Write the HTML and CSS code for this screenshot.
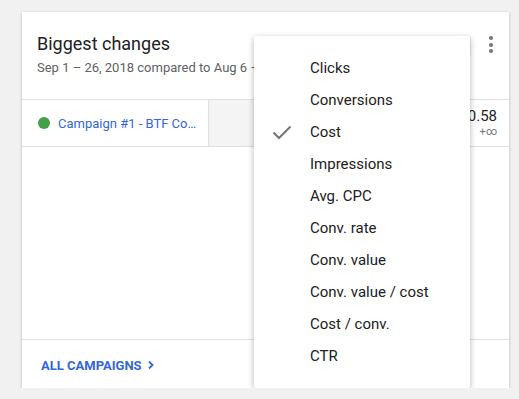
FILE: index.html
```html
<!DOCTYPE html>
<html lang="en">
<head>
    <meta charset="UTF-8">
    <meta name="viewport" content="width=device-width, initial-scale=1.0">
    <title>Biggest changes</title>
    <link rel="stylesheet" href="styles.css">
</head>
<body>
    <div class="card">
        <div class="header">
            <div class="titles">
                <h1>Biggest changes</h1>
                <div class="subtitle">Sep 1 – 26, 2018 compared to Aug 6 – 31, 2018</div>
            </div>
            <div class="metric-btn">Cost</div>
            <div class="kebab">
                <span></span><span></span><span></span>
            </div>
        </div>
        <div class="row">
            <div class="name">
                <span class="dot"></span>
                <a href="#">Campaign #1 - BTF Co…</a>
            </div>
            <div class="bar"></div>
            <div class="value">
                <div class="num">$0.58</div>
                <div class="delta">+∞</div>
            </div>
        </div>
        <div class="spacer"></div>
        <div class="footer">
            <a href="#">ALL CAMPAIGNS
                <svg width="8" height="10" viewBox="0 0 8 10"><path d="M2 1.5 L5.5 5 L2 8.5" fill="none" stroke="#3367d6" stroke-width="1.8"/></svg>
            </a>
        </div>

        <ul class="menu">
            <li>Clicks</li>
            <li>Conversions</li>
            <li class="checked">
                <svg class="check" width="20" height="16" viewBox="0 0 20 16"><path d="M1.5 8.5 L7 14 L18.5 2.5" fill="none" stroke="#757575" stroke-width="2"/></svg>
                Cost
            </li>
            <li>Impressions</li>
            <li>Avg. CPC</li>
            <li>Conv. rate</li>
            <li>Conv. value</li>
            <li>Conv. value / cost</li>
            <li>Cost / conv.</li>
            <li>CTR</li>
        </ul>
    </div>
</body>
</html>
```
FILE: styles.css
```css
body {
    font-family: Roboto, Arial, sans-serif;
    background-color: #f1f1f1;
    margin: 0;
    padding: 12px 0 0 22px;
}
.card {
    position: relative;
    width: 487px;
    height: 376px;
    background-color: #fff;
    box-shadow: 0 1px 3px rgba(0, 0, 0, 0.25);
    display: flex;
    flex-direction: column;
}
.header {
    height: 88px;
    display: flex;
    padding: 0 12px 0 15px;
    border-bottom: 1px solid #e0e0e0;
    box-sizing: border-box;
}
.titles {
    flex: 1;
    overflow: hidden;
    white-space: nowrap;
}
h1 {
    margin: 20px 0 0;
    font-size: 18px;
    font-weight: 400;
    color: #212121;
    line-height: 24px;
}
.subtitle {
    margin-top: 4px;
    font-size: 13px;
    color: #616161;
}
.metric-btn {
    margin-top: 24px;
    width: 52px;
    height: 20px;
    border-radius: 2px;
    background-color: #eee;
    font-size: 13px;
}
.kebab {
    margin: 24px 0 0 14px;
    width: 12px;
    display: flex;
    flex-direction: column;
    align-items: center;
    gap: 2.5px;
}
.kebab span {
    width: 4px;
    height: 4px;
    border-radius: 50%;
    background-color: #757575;
}
.row {
    height: 47px;
    display: flex;
    border-bottom: 1px solid #e0e0e0;
    box-sizing: border-box;
}
.name {
    width: 187px;
    box-sizing: border-box;
    display: flex;
    align-items: center;
    padding-left: 16px;
    border-right: 1px solid #e0e0e0;
}
.dot {
    width: 12px;
    height: 12px;
    border-radius: 50%;
    background-color: #43a047;
    margin-right: 8px;
    flex-shrink: 0;
}
.name a {
    color: #3367d6;
    font-size: 13px;
    text-decoration: none;
    white-space: nowrap;
}
.bar {
    flex: 1;
    background-color: #f4f4f4;
}
.value {
    width: 74px;
    padding-right: 12px;
    text-align: right;
    padding-top: 7px;
}
.num {
    font-size: 15px;
    color: #212121;
}
.delta {
    font-size: 11px;
    color: #757575;
}
.spacer {
    flex: 1;
}
.footer {
    height: 48px;
    border-top: 1px solid #e0e0e0;
    display: flex;
    align-items: center;
    padding-left: 19px;
}
.footer a {
    color: #3367d6;
    font-size: 13px;
    font-weight: 700;
    text-decoration: none;
    display: flex;
    align-items: center;
    gap: 5px;
    padding-top: 2px;
}
.menu {
    position: absolute;
    left: 232px;
    top: 24px;
    width: 216px;
    margin: 0;
    padding: 16px 0;
    list-style: none;
    background-color: #fff;
    box-shadow: 0 2px 6px rgba(0, 0, 0, 0.3);
    border-radius: 2px;
}
.menu li {
    position: relative;
    height: 32px;
    line-height: 32px;
    padding-left: 56px;
    font-size: 15px;
    color: #212121;
}
.check {
    position: absolute;
    left: 18px;
    top: 8px;
}
```
